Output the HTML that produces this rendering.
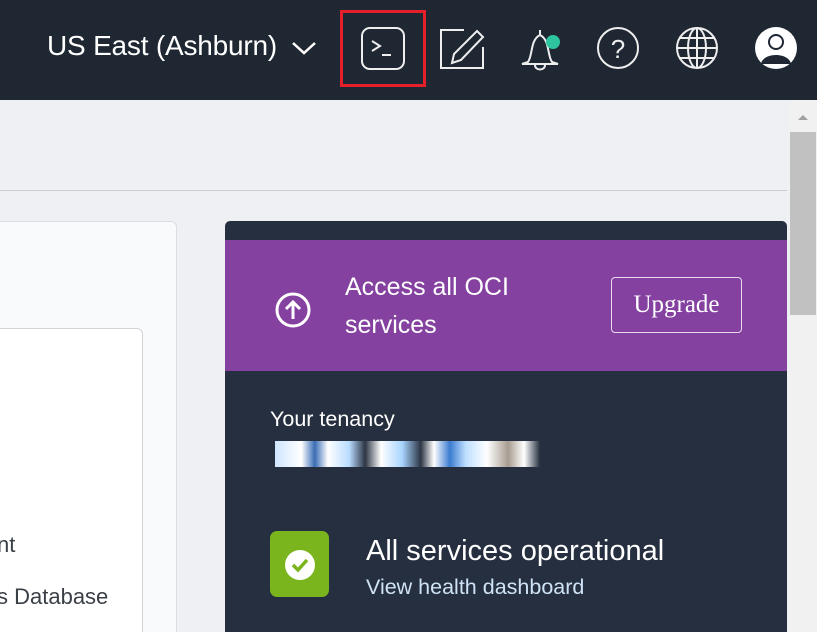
<!DOCTYPE html>
<html><head><style>
*{margin:0;padding:0;box-sizing:border-box}
html,body{width:817px;height:632px;overflow:hidden}
body{background:#eff0f3;font-family:"Liberation Sans",sans-serif;position:relative}
.hdr{position:absolute;left:0;top:0;width:817px;height:100px;background:#1f2733}
.abs{position:absolute}
</style></head><body>
<div class="hdr">
 <div class="abs" style="left:47px;top:30px;color:#fff;font-size:28px;letter-spacing:-0.2px">US East (Ashburn)</div>
 <svg class="abs" style="left:290px;top:38px" width="28" height="20"><path d="M3 5 L14 15 L25 5" stroke="#fff" stroke-width="2.5" fill="none"/></svg>
 <div class="abs" style="left:340px;top:10px;width:86px;height:77px;border:3px solid #e5202a"></div>
 <svg class="abs" style="left:330px;top:0" width="487" height="100">
  <g stroke="#eee" stroke-width="2" fill="none">
   <rect x="32" y="28" width="42" height="41" rx="8"/>
   <path d="M42 41 L50 46 L42 51 M52 55 L61 55"/>
   <path d="M134 30 L111 30 L111 68 L153 68 L153 47"/>
   <path d="M147 31 L153 37 L131 60 L122 63 L124 54 Z"/>
   <path d="M210 30 L210 35 M198 62 C203 55 200 40 210 35 C220 40 217 55 222 62 L228 64 L192 64 Z M205 65 C205 71 215 71 215 65"/>
   <circle cx="288" cy="48" r="20"/>
   <circle cx="367" cy="48" r="20"/>
   <ellipse cx="367" cy="48" rx="9" ry="20"/>
   <path d="M347 48 L387 48 M350 38 L384 38 M350 58 L384 58 M367 28 L367 68"/>
  </g>
  <circle cx="223" cy="42" r="7" fill="#2ec4a0"/>
  <text x="288" y="58" fill="#eee" font-size="26" font-family="Liberation Sans" text-anchor="middle">?</text>
  <circle cx="446" cy="48" r="21" fill="#fff"/>
  <circle cx="446" cy="42" r="8" fill="#1f2733"/>
  <path d="M431 64 C433 52 459 52 461 64 Z" fill="#1f2733"/>
  <circle cx="446" cy="42" r="6" fill="#fff"/>
 </svg>
</div>
<div class="abs" style="left:0;top:190px;width:787px;height:1px;background:#c9ccd1"></div>
<div class="abs" style="left:789px;top:100px;width:28px;height:532px;background:#f1f1f1"></div>
<div class="abs" style="left:790px;top:132px;width:26px;height:183px;background:#c1c1c1"></div>
<svg class="abs" style="left:796px;top:112px" width="14" height="10"><path d="M2 8 L7 3 L12 8 Z" fill="#a0a0a0"/></svg>
<div class="abs" style="left:-10px;top:221px;width:187px;height:411px;background:#f9fafc;border:1px solid #dcdde0;border-bottom:none;border-radius:6px 6px 0 0"></div>
<div class="abs" style="left:-10px;top:328px;width:153px;height:304px;background:#fff;border:1px solid #d2d4d8;border-bottom:none;border-radius:6px 6px 0 0"></div>
<div class="abs" style="left:-3px;top:532px;font-size:22px;color:#3a3f47">nt</div>
<div class="abs" style="left:-3px;top:584px;font-size:22px;color:#3a3f47">s Database</div>
<div class="abs" style="left:225px;top:221px;width:562px;height:411px;background:#252f3f;border-radius:5px 5px 0 0"></div>
<div class="abs" style="left:225px;top:240px;width:562px;height:131px;background:#8441a0"></div>
<svg class="abs" style="left:272px;top:290px" width="42" height="42"><circle cx="21" cy="20" r="16" stroke="#fff" stroke-width="3" fill="none"/><path d="M21 29 L21 12 M14 19 L21 12 L28 19" stroke="#fff" stroke-width="3" fill="none"/></svg>
<div class="abs" style="left:345px;top:268px;color:#fff;font-size:25px;line-height:38px">Access all OCI<br>services</div>
<div class="abs" style="left:611px;top:277px;width:131px;height:56px;border:1.5px solid #e8daf0;border-radius:4px;color:#fff;font-family:'Liberation Serif',serif;font-size:25px;text-align:center;line-height:54px">Upgrade</div>
<div class="abs" style="left:270px;top:407px;color:#fff;font-size:21.5px">Your tenancy</div>
<div class="abs" style="left:275px;top:441px;width:265px;height:26px;background:linear-gradient(90deg,#cfe6ff 0,#fff 10%,#3a6db5 15%,#fff 20%,#b9dcff 28%,#2d3645 34%,#fff 40%,#a8d4ff 48%,#2d3645 55%,#fff 60%,#3b7bd0 66%,#bfe0ff 72%,#fff 80%,#a89c90 88%,#fff 94%,#252f3f 100%)"></div>
<div class="abs" style="left:270px;top:531px;width:59px;height:66px;background:#7ab51d;border-radius:7px"></div>
<svg class="abs" style="left:284px;top:548px" width="34" height="34"><circle cx="16" cy="17" r="15" fill="#fff"/><path d="M9 17 L14 22 L23 12" stroke="#7ab51d" stroke-width="3.5" fill="none"/></svg>
<div class="abs" style="left:366px;top:535px;color:#fff;font-size:29px">All services operational</div>
<div class="abs" style="left:366px;top:575px;color:#cfe3f7;font-size:21.5px">View health dashboard</div>
</body></html>
